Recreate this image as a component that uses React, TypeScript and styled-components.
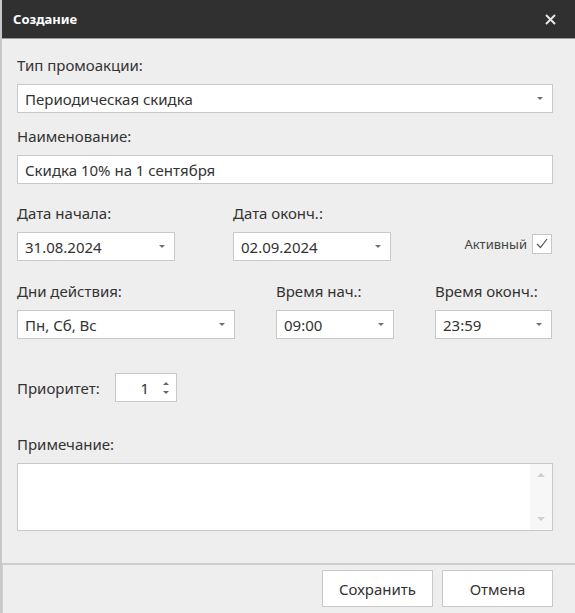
import React from "react";
import styled, { createGlobalStyle } from "styled-components";

const GlobalStyle = createGlobalStyle`
  html, body {
    margin: 0;
    padding: 0;
    background: #eeeeee;
  }
  * {
    box-sizing: border-box;
  }
`;

const FONT = `"Noto Sans", "Open Sans", Arial, sans-serif`;

export default function App() {
  return (
    <>
      <GlobalStyle />
      <Window>
        <TitleBar>
          <Title>Создание</Title>
          <CloseButton aria-label="close">
            <svg width="11" height="11" viewBox="0 0 11 11">
              <path d="M1 1 L10 10 M10 1 L1 10" stroke="#e6e6e6" strokeWidth="2" />
            </svg>
          </CloseButton>
        </TitleBar>

        <Content>
          <Group $top={16}>
            <Label>Тип промоакции:</Label>
            <Select>
              <span>Периодическая скидка</span>
              <Arrow />
            </Select>
          </Group>

          <Group $top={13}>
            <Label>Наименование:</Label>
            <Input>Скидка 10% на 1 сентября</Input>
          </Group>

          <Row $top={19}>
            <Group $width={158}>
              <Label>Дата начала:</Label>
              <Select>
                <span>31.08.2024</span>
                <Arrow />
              </Select>
            </Group>
            <Group $width={158} $left={58}>
              <Label>Дата оконч.:</Label>
              <Select>
                <span>02.09.2024</span>
                <Arrow />
              </Select>
            </Group>
            <CheckWrap>
              <CheckLabel>Активный</CheckLabel>
              <CheckBox>
                <svg width="12" height="11" viewBox="0 0 12 11">
                  <path d="M1 6 L4.5 9.5 L11 1" fill="none" stroke="#555" strokeWidth="1.2" />
                </svg>
              </CheckBox>
            </CheckWrap>
          </Row>

          <Row $top={20}>
            <Group $width={218}>
              <Label>Дни действия:</Label>
              <Select>
                <span>Пн, Сб, Вс</span>
                <Arrow />
              </Select>
            </Group>
            <Group $width={118} $left={41}>
              <Label>Время нач.:</Label>
              <Select>
                <span>09:00</span>
                <Arrow />
              </Select>
            </Group>
            <Group $width={117} $left={41}>
              <Label>Время оконч.:</Label>
              <Select>
                <span>23:59</span>
                <Arrow />
              </Select>
            </Group>
          </Row>

          <PriorityRow>
            <PriorityLabel>Приоритет:</PriorityLabel>
            <Spinner>
              <SpinValue>1</SpinValue>
              <SpinArrows>
                <svg width="8" height="16" viewBox="0 0 8 16">
                  <path d="M1 5 L4 2 L7 5 Z" fill="#666" />
                  <path d="M1 11 L4 14 L7 11 Z" fill="#666" />
                </svg>
              </SpinArrows>
            </Spinner>
          </PriorityRow>

          <Group $top={32}>
            <Label>Примечание:</Label>
            <TextArea>
              <ScrollBar>
                <svg width="8" height="6" viewBox="0 0 8 6">
                  <path d="M0 5 L4 1 L8 5 Z" fill="#cfcfcf" />
                </svg>
                <svg width="8" height="6" viewBox="0 0 8 6">
                  <path d="M0 1 L4 5 L8 1 Z" fill="#cfcfcf" />
                </svg>
              </ScrollBar>
            </TextArea>
          </Group>
        </Content>

        <Footer>
          <Button>Сохранить</Button>
          <Button>Отмена</Button>
        </Footer>
      </Window>
    </>
  );
}

const Window = styled.div`
  width: 575px;
  height: 613px;
  display: flex;
  flex-direction: column;
  background: #eeeeee;
  border-left: 2px solid #c8c8c8;
  font-family: ${FONT};
  color: #333;
  overflow: hidden;
`;

const TitleBar = styled.div`
  height: 39px;
  flex: none;
  display: flex;
  align-items: center;
  justify-content: space-between;
  padding: 0 19px 0 11px;
  background: #303030;
  border-bottom: 1px solid #9a9a9a;
`;

const Title = styled.div`
  font-size: 13px;
  font-weight: 700;
  color: #ffffff;
`;

const CloseButton = styled.div`
  display: flex;
  align-items: center;
  justify-content: center;
  width: 12px;
  height: 12px;
`;

const Content = styled.div`
  flex: 1;
  padding: 0 22px 0 15px;
`;

const Group = styled.div<{ $top?: number; $width?: number; $left?: number }>`
  display: flex;
  flex-direction: column;
  gap: 9px;
  margin-top: ${(p) => p.$top ?? 0}px;
  margin-left: ${(p) => p.$left ?? 0}px;
  width: ${(p) => (p.$width ? `${p.$width}px` : "auto")};
  flex: none;
`;

const Row = styled.div<{ $top: number }>`
  display: flex;
  align-items: flex-end;
  margin-top: ${(p) => p.$top}px;
`;

const Label = styled.div`
  font-size: 15px;
  line-height: 20px;
  color: #333;
  white-space: nowrap;
`;

const fieldBase = `
  height: 29px;
  background: #ffffff;
  border: 1px solid #c8c8c8;
  display: flex;
  align-items: center;
  padding: 0 0 0 7px;
  font-size: 15px;
  color: #333;
  white-space: nowrap;
`;

const Select = styled.div`
  ${fieldBase}
  justify-content: space-between;
  padding-right: 9px;
`;

const Input = styled.div`
  ${fieldBase}
`;

const Arrow = styled.span`
  width: 0;
  height: 0;
  border-left: 3.5px solid transparent;
  border-right: 3.5px solid transparent;
  border-top: 3.5px solid #707070;
`;

const CheckWrap = styled.div`
  margin-left: auto;
  display: flex;
  align-items: center;
  gap: 5px;
  height: 29px;
  margin-bottom: 3px;
`;

const CheckLabel = styled.span`
  font-size: 13px;
  color: #444;
`;

const CheckBox = styled.span`
  width: 20px;
  height: 20px;
  margin-right: 1px;
  background: #fff;
  border: 1px solid #c8c8c8;
  display: flex;
  align-items: center;
  justify-content: center;
`;

const PriorityRow = styled.div`
  display: flex;
  align-items: center;
  margin-top: 34px;
`;

const PriorityLabel = styled(Label)`
  width: 98px;
`;

const Spinner = styled.div`
  width: 62px;
  height: 29px;
  background: #fff;
  border: 1px solid #c8c8c8;
  display: flex;
  align-items: center;
  justify-content: flex-end;
  padding-right: 6px;
  gap: 13px;
`;

const SpinValue = styled.span`
  font-size: 15px;
  color: #333;
`;

const SpinArrows = styled.span`
  display: flex;
  align-items: center;
`;

const TextArea = styled.div`
  height: 68px;
  background: #fff;
  border: 1px solid #c8c8c8;
  display: flex;
  justify-content: flex-end;
`;

const ScrollBar = styled.div`
  width: 22px;
  background: #f7f7f7;
  display: flex;
  flex-direction: column;
  align-items: center;
  justify-content: space-between;
  padding: 8px 0 8px;
`;

const Footer = styled.div`
  height: 50px;
  flex: none;
  border-top: 2px solid #cdcdcd;
  border-left: 1px solid #d0d0d0;
  display: flex;
  justify-content: flex-end;
  align-items: flex-start;
  gap: 9px;
  padding: 5px 22px 0 0;
`;

const Button = styled.div`
  width: 111px;
  height: 37px;
  background: #fff;
  border: 1px solid #c8c8c8;
  display: flex;
  align-items: center;
  justify-content: center;
  font-size: 15px;
  color: #333;
`;
